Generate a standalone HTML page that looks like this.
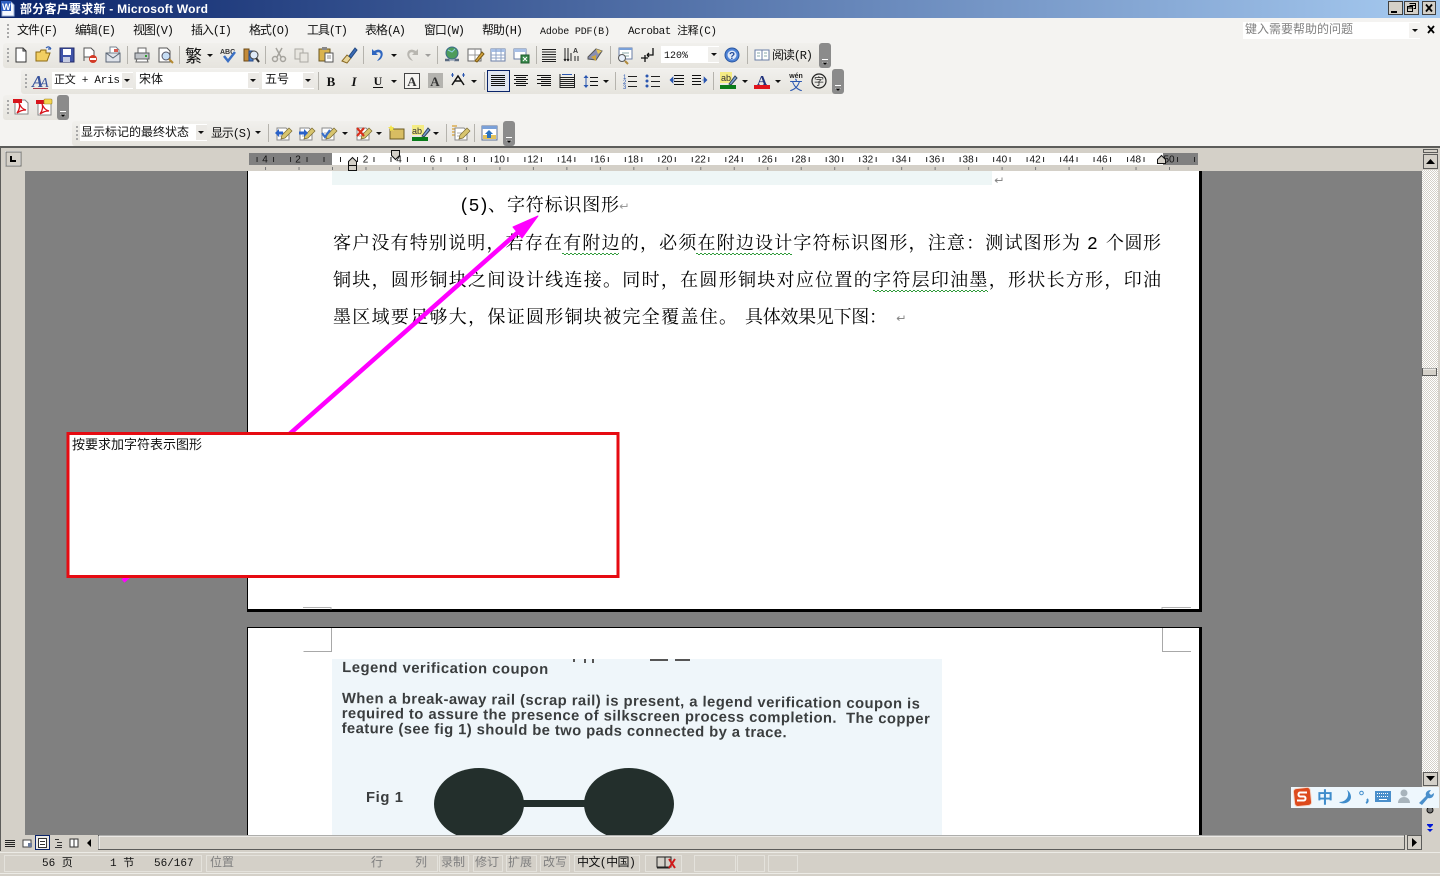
<!DOCTYPE html>
<html lang="zh"><head><meta charset="utf-8"><title>部分客户要求新 - Microsoft Word</title>
<style>
html,body{margin:0;padding:0;width:1440px;height:876px;overflow:hidden;background:#808080}
svg{display:block;position:absolute;left:0;top:0}
text{white-space:pre}
.u{font:12px "Liberation Mono","WenQuanYi Zen Hei","Noto Sans CJK SC",sans-serif;fill:#111}
.g{fill:#808080}
.d{font:18px "Liberation Mono","Noto Serif CJK SC",serif;fill:#000}
.r{font:10px "Liberation Sans",sans-serif;fill:#111;text-anchor:middle}
.s{font:bold 14.800px "Liberation Sans",sans-serif;fill:#3a3d3e}
</style></head><body>
<svg width="1440" height="876" viewBox="0 0 1440 876" xmlns="http://www.w3.org/2000/svg">
<defs>
<linearGradient id="tb" x1="0" x2="1" y1="0" y2="0"><stop offset="0" stop-color="#0a246a"/><stop offset="1" stop-color="#a6caf0"/></linearGradient>
<linearGradient id="bar" x1="0" x2="0" y1="0" y2="1"><stop offset="0" stop-color="#f1f0ed"/><stop offset="1" stop-color="#e6e4de"/></linearGradient>
<pattern id="chk" width="2" height="2" patternUnits="userSpaceOnUse"><rect width="2" height="2" fill="#fff"/><rect width="1" height="1" fill="#d4d0c8"/><rect x="1" y="1" width="1" height="1" fill="#d4d0c8"/></pattern>
<pattern id="rt" width="33.48" height="20" patternUnits="userSpaceOnUse" patternTransform="translate(332 153)"><rect x="8" y="4" width="1" height="5" fill="#222"/><rect x="25" y="4" width="1" height="5" fill="#222"/><rect x="0" y="14" width="1" height="3" fill="#777"/></pattern>
<path id="da" d="M-3 0h6l-3 3z" fill="#111"/>
<g id="grip"><rect y="0" width="2" height="2" fill="#a8a8a8"/><rect y="4" width="2" height="2" fill="#a8a8a8"/><rect y="8" width="2" height="2" fill="#a8a8a8"/><rect y="12" width="2" height="2" fill="#a8a8a8"/></g>
<g id="hnd"><rect x="0" y="0" width="12" height="25" rx="3" fill="#8b8b8b"/><rect x="3" y="16" width="6" height="1" fill="#fff"/><path d="M3 19h6l-3 3z" fill="#fff"/><path d="M3.500 19.500h5l-2.500 2.500z" fill="#000"/></g>
<g id="pdf"><path d="M-6-7h10l3 3v11h-13z" fill="#fff" stroke="#888"/><rect x="-8" y="-8" width="9" height="4" fill="#d8141c"/><path d="M-4 6c3-4 3-8 2-10 2 4 3 6 7 7-4 0-6 1-9 3z" fill="none" stroke="#d8141c" stroke-width="1.300"/></g>
<g id="rev"><path d="M-6-5h9l3 3v9h-12z" fill="#fff" stroke="#8a8a8a"/><path d="M-4 0h6M-4 3h8" stroke="#b0b0b0"/><path d="M-1 2l7-7 3 3-7 7-4 1z" fill="#d8c56e" stroke="#7a6a30" stroke-width=".7"/></g>
</defs>

<!-- window frame / toolbars -->
<rect width="1440" height="876" fill="#d4d0c8"/>
<rect x="0" y="0" width="1440" height="18" fill="url(#tb)"/>
<rect x="0" y="18" width="1440" height="128" fill="#f4f3f1"/>
<rect x="0" y="146" width="1440" height="2" fill="#5c5c5a"/>

<path d="M2 2h9l3 3v11h-12z" fill="#f4f8ff" stroke="#9fb4da"/><rect x="1" y="1" width="10" height="10" fill="#2f5fc0"/><text x="2" y="10" font-family="Liberation Sans" font-size="9" font-weight="bold" fill="#fff">W</text>
<text x="20" y="13" font-family="Liberation Sans,Noto Sans CJK SC,sans-serif" font-size="12" font-weight="bold" fill="#fff" textLength="188">部分客户要求新 - Microsoft Word</text>

<g fill="#d4d0c8" stroke="#404040" stroke-width="1">
<rect x="1388.500" y="1.500" width="14" height="13"/><rect x="1404.500" y="1.500" width="14" height="13"/><rect x="1422.500" y="1.500" width="13" height="13"/></g>
<rect x="1391" y="11" width="6" height="2" fill="#000"/>
<path d="M1409.500 3.500h6v5h-2M1409.500 5.500h6M1407.500 6.500h5v5h-5zM1407.500 8h5" fill="none" stroke="#000"/>
<path d="M1426 4.500l6 7M1432 4.500l-6 7" stroke="#000" stroke-width="1.800"/>

<!-- menu -->
<use href="#grip" x="7" y="24"/>
<g class="u">
<text class="u" x="17" y="34" textLength="41">文件(F)</text>
<text class="u" x="75" y="34" textLength="41">编辑(E)</text>
<text class="u" x="133" y="34" textLength="41">视图(V)</text>
<text class="u" x="191" y="34" textLength="41">插入(I)</text>
<text class="u" x="249" y="34" textLength="41">格式(O)</text>
<text class="u" x="307" y="34" textLength="41">工具(T)</text>
<text class="u" x="365" y="34" textLength="41">表格(A)</text>
<text class="u" x="424" y="34" textLength="41">窗口(W)</text>
<text class="u" x="482" y="34" textLength="41">帮助(H)</text>
<text class="u" x="540" y="34" textLength="70" style="font-size:10px">Adobe PDF(B)</text>
<text class="u" x="628" y="34" textLength="89" style="font-size:11px">Acrobat 注释(C)</text>
</g>
<rect x="1243" y="22" width="177" height="17" fill="#fff"/>
<rect x="1409" y="23" width="11" height="15" fill="#f4f3f1"/>
<text class="u g" x="1245" y="33" style="font-size:12px;fill:#808080">键入需要帮助的问题</text>
<use href="#da" x="1415" y="29"/>
<path d="M1428 26l6 7M1434 26l-6 7" stroke="#000" stroke-width="1.800"/>

<!-- toolbar 1 -->
<rect x="3" y="43" width="822" height="25" rx="3" fill="url(#bar)"/><use href="#hnd" x="819" y="43"/>
<use href="#grip" x="7" y="48"/>
<g transform="translate(21 55)"><path d="M-5-7h7l3 3v11h-10z" fill="#fff" stroke="#333"/><path d="M2-7v3h3" fill="none" stroke="#333"/></g>
<g transform="translate(44 55)"><path d="M-8 6v-9h4l1-2h5v3h4l-3 8z" fill="#f2cf62" stroke="#8c6a14"/><path d="M2-7c2-2 4-1 5 1M7-6l-3 0" fill="none" stroke="#2f5bb0" stroke-width="1.200"/></g>
<g transform="translate(67 55)"><rect x="-7" y="-7" width="14" height="14" fill="#3f53a8" stroke="#222a66"/><rect x="-4" y="-6" width="8" height="6" fill="#fff"/><rect x="-4" y="2" width="7" height="5" fill="#c6cce2"/></g>
<g transform="translate(90 55)"><path d="M-6-7h7l3 3v6h-10z" fill="#fff" stroke="#555"/><path d="M-6-7v13" stroke="#555"/><circle cx="3" cy="4" r="4" fill="#d23a26"/><rect x="0" y="3" width="6" height="2" fill="#fff"/></g>
<g transform="translate(113 55)"><rect x="-7" y="-2" width="14" height="9" fill="#dfe3ea" stroke="#5b6675"/><path d="M-3-8h6l3 3v3h-9z" fill="#fff" stroke="#77828f"/><path d="M-7-2l7 5 7-5" fill="none" stroke="#5b6675"/><rect x="1" y="-6" width="4" height="3" fill="#d85b50"/></g>
<rect x="127" y="46" width="1" height="18" fill="#b5b3ad"/>
<g transform="translate(142 55)"><path d="M-4-7h8v5h-8z" fill="#fff" stroke="#666"/><path d="M-7-2h14v6h-14z" fill="#bfc3c8" stroke="#55595e"/><path d="M-5 4h10l1 3h-12z" fill="#fff" stroke="#666"/><rect x="3" y="0" width="2" height="2" fill="#2ca02c"/></g>
<g transform="translate(165 55)"><path d="M-6-7h8l3 3v11h-11z" fill="#fff" stroke="#555"/><circle cx="1" cy="1" r="4" fill="#c7def5" stroke="#556"/><path d="M4 4l4 4" stroke="#b58a30" stroke-width="2"/></g>
<rect x="179" y="46" width="1" height="18" fill="#b5b3ad"/>
<text x="185" y="62" font-family="Liberation Sans,Noto Sans CJK SC,sans-serif" font-size="17" fill="#111">繁</text><use href="#da" x="210" y="54"/>
<g transform="translate(228 55)"><text x="-8" y="-1" font-family="Liberation Sans" font-size="7" font-weight="bold" fill="#333">ABC</text><path d="M-4 1l4 5 7-9" fill="none" stroke="#3b70c4" stroke-width="2.500"/></g>
<g transform="translate(251 55)"><rect x="-7" y="-6" width="5" height="12" fill="#c48a38" stroke="#6b4a18"/><rect x="-2" y="-4" width="4" height="10" fill="#4a7cc6" stroke="#264a88"/><circle cx="3" cy="0" r="4" fill="#dfeaf8" stroke="#444"/><path d="M5 3l3 4" stroke="#333" stroke-width="2"/></g>
<rect x="265" y="46" width="1" height="18" fill="#b5b3ad"/>
<g transform="translate(279 55)" fill="none" stroke="#a5a39d" stroke-width="1.500"><path d="M-3-7l5 9M3-7l-5 9"/><circle cx="-4" cy="4" r="2.500"/><circle cx="4" cy="4" r="2.500"/></g>
<g transform="translate(302 55)" fill="#e8e6e0" stroke="#aaa8a2"><path d="M-7-6h8v10h-8z"/><path d="M-2-2h8v9h-8z"/></g>
<g transform="translate(326 55)"><rect x="-7" y="-6" width="11" height="12" fill="#d9b34e" stroke="#6c5720"/><rect x="-4" y="-8" width="5" height="3" fill="#888"/><path d="M-1-2h8v9h-8z" fill="#fff" stroke="#555"/><path d="M1 1h4M1 3h4" stroke="#888"/></g>
<g transform="translate(349 55)"><path d="M-7 6l5-6 4 3-4 5z" fill="#e9d69a" stroke="#8a6a24"/><path d="M0 1l6-8 2 2-6 8z" fill="#3b6bb5" stroke="#234a82"/></g>
<rect x="363" y="46" width="1" height="18" fill="#b5b3ad"/>
<g transform="translate(378 55)"><path d="M-6-6v6h6l-2-2c3-2 6 0 4 4l-3 4c7-2 7-10 3-11-2-1-4 0-6 1z" fill="#2f66c0"/></g><use href="#da" x="394" y="54"/>
<g transform="translate(412 55)"><path d="M6-6v6h-6l2-2c-3-2-6 0-4 4l3 4c-7-2-7-10-3-11 2-1 4 0 6 1z" fill="#b8b6b0"/></g><use href="#da" x="428" y="54" opacity=".35"/>
<rect x="437" y="46" width="1" height="18" fill="#b5b3ad"/>
<g transform="translate(452 55)"><circle cx="0" cy="-2" r="6" fill="#4d9c5b" stroke="#3b6a8c"/><path d="M-4-5l4 2 3-3" stroke="#8fd0e6" fill="none"/><path d="M-7 5h5M2 5h5" stroke="#5a6a80" stroke-width="2.500"/><path d="M-3 5h6" stroke="#9aa8ba" stroke-width="1.500"/></g>
<g transform="translate(475 55)"><rect x="-7" y="-6" width="13" height="12" fill="#fff" stroke="#666"/><path d="M-7 0h13M0-6v12" stroke="#999"/><path d="M0 6l7-9 2 2-7 8z" fill="#d4a33c" stroke="#7a5a14"/></g>
<g transform="translate(498 55)"><rect x="-7" y="-6" width="14" height="12" fill="#fff" stroke="#6a7ea6"/><rect x="-7" y="-6" width="14" height="3" fill="#a8c0e6"/><path d="M-7 0h14M-7 3h14M-2-6v12M3-6v12" stroke="#8fa3c6"/></g>
<g transform="translate(521 55)"><rect x="-7" y="-6" width="12" height="10" fill="#fff" stroke="#6a7ea6"/><rect x="-7" y="-6" width="12" height="3" fill="#a8c0e6"/><rect x="0" y="0" width="8" height="8" fill="#3a8a4c" stroke="#1e5a2c"/><path d="M2 2l4 4M6 2l-4 4" stroke="#fff"/></g>
<rect x="536" y="46" width="1" height="18" fill="#b5b3ad"/>
<g transform="translate(549 55)" fill="#222"><rect x="-7" y="-6" width="14" height="1"/><rect x="-7" y="-3.500" width="14" height="1"/><rect x="-7" y="-1" width="14" height="1"/><rect x="-7" y="1.500" width="14" height="1"/><rect x="-7" y="4" width="14" height="1"/><rect x="-7" y="6" width="14" height="1"/></g>
<g transform="translate(572 55)" stroke="#222" fill="none"><path d="M-7-7v13M-4-7v13M-1-2v8M3 1v5M6 1v5"/><text x="1" y="-2" stroke="none" fill="#333" font-family="Liberation Sans" font-size="7" font-weight="bold">A</text><path d="M-7 6l-1-2M-7 6l1-2M-4 6l-1-2M-4 6l1-2" /></g>
<g transform="translate(595 55)"><path d="M-7 2l8-8 6 2-6 9-8-1z" fill="#8a8fb2" stroke="#555"/><path d="M1-6l6 2-4 3z" fill="#e3c35c"/><path d="M-4 2l5-2v6z" fill="#cfa63c"/></g>
<rect x="610" y="46" width="1" height="18" fill="#b5b3ad"/>
<g transform="translate(625 55)"><rect x="-6" y="-7" width="13" height="11" fill="#fff" stroke="#6a7ea6"/><rect x="-6" y="-7" width="13" height="2" fill="#7aa0d8"/><path d="M-3-2h7M-3 1h7" stroke="#8aa"/><circle cx="-3" cy="3" r="3.500" fill="#e8f0fb" stroke="#555"/><path d="M0 6l3 3" stroke="#b08a3a" stroke-width="2"/></g>
<g transform="translate(648 55)" fill="none" stroke="#111"><path d="M5-7v7h-6M-1 0l2-2M-1 0l2 2" stroke-width="1.300"/><path d="M-7 3h7M-3 0v7" stroke-width="1.300"/></g>
<rect x="661" y="46" width="58" height="17" fill="#fff"/><rect x="708" y="47" width="11" height="15" fill="#f0efec"/>
<text x="664" y="58" font-family="Liberation Mono" font-size="10" fill="#111">120%</text><use href="#da" x="714" y="53"/>
<g transform="translate(732 55)"><circle r="7" fill="#4d82d6" stroke="#2a56a0"/><circle r="4.500" fill="#dfe9f8"/><text x="-3" y="4" font-family="Liberation Sans" font-size="10" font-weight="bold" fill="#234a9a">?</text></g>
<rect x="747" y="46" width="1" height="18" fill="#b5b3ad"/>
<g transform="translate(762 55)" fill="#fff" stroke="#6a7ea6"><path d="M-7-5h7v10h-7z"/><path d="M0-5h7v10h-7z"/><path d="M-5-2h3M-5 1h3M2-2h3M2 1h3" stroke="#8aa"/></g>
<text class="u" x="772" y="59" textLength="41">阅读(R)</text>

<!-- toolbar 2 -->
<rect x="21" y="69" width="816" height="25" rx="3" fill="url(#bar)"/><use href="#hnd" x="832" y="69"/>
<use href="#grip" x="25" y="74"/>
<text x="32" y="87" font-family="Liberation Serif" font-size="17" font-style="italic" font-weight="bold" fill="#38539c">A</text><text x="40" y="87" font-family="Liberation Serif" font-size="14" font-style="italic" fill="#38539c">A</text><rect x="33" y="88" width="15" height="1" fill="#a53a4a"/>
<rect x="52" y="72" width="81" height="17" fill="#fff"/><rect x="122" y="73" width="11" height="15" fill="#ebe9e5"/>
<text x="54" y="83" font-family="Liberation Mono,WenQuanYi Zen Hei,sans-serif" font-size="11" fill="#111" textLength="66">正文 + Aris</text><use href="#da" x="127" y="79"/>
<rect x="136" y="72" width="123" height="17" fill="#fff"/><rect x="248" y="73" width="11" height="15" fill="#ebe9e5"/>
<text class="u" x="139" y="83">宋体</text><use href="#da" x="253" y="79"/>
<rect x="262" y="72" width="52" height="17" fill="#fff"/><rect x="303" y="73" width="11" height="15" fill="#ebe9e5"/>
<text class="u" x="265" y="83">五号</text><use href="#da" x="308" y="79"/>
<rect x="318" y="72" width="1" height="18" fill="#b5b3ad"/>
<text x="331" y="86" font-family="Liberation Serif" font-size="13" font-weight="bold" text-anchor="middle" fill="#111">B</text>
<text x="354" y="86" font-family="Liberation Serif" font-size="13" font-weight="bold" font-style="italic" text-anchor="middle" fill="#111">I</text>
<text x="378" y="85" font-family="Liberation Serif" font-size="12" font-weight="bold" text-anchor="middle" fill="#111">U</text><rect x="373" y="87" width="10" height="1" fill="#111"/><use href="#da" x="394" y="80"/>
<rect x="404.500" y="73.500" width="15" height="15" fill="#f5f4f1" stroke="#444"/><text x="412" y="86" font-family="Liberation Serif" font-size="13" font-weight="bold" text-anchor="middle" fill="#333">A</text>
<rect x="428" y="73" width="15" height="15" fill="#b4b3af"/><text x="435" y="86" font-family="Liberation Serif" font-size="13" font-weight="bold" text-anchor="middle" fill="#333">A</text>
<g transform="translate(458 80)"><path d="M-6 5l6-9 6 9M-3 1h6" fill="none" stroke="#111" stroke-width="1.500"/><path d="M-7-5h3M7-5h-3M-5.500-7v4M5.500-7v4" stroke="#2a56b0"/></g><use href="#da" x="474" y="80"/>
<rect x="484" y="72" width="1" height="18" fill="#b5b3ad"/>
<rect x="487.500" y="70.500" width="22" height="21" fill="#e1e6f1" stroke="#0a246a"/>
<path d="M491 75.500h14M491 77.500h14M491 79.500h14M491 81.500h14M491 83.500h14M491 85.500h14" stroke="#111"/>
<path d="M514 75.500h14M516 77.500h10M514 79.500h14M516 81.500h10M514 83.500h14M516 85.500h10" stroke="#111"/>
<path d="M537 75.500h14M541 77.500h10M537 79.500h14M541 81.500h10M537 83.500h14M541 85.500h10" stroke="#111"/>
<path d="M560 77.500h14M560 79.500h14M560 81.500h14M560 83.500h14M560 85.500h14M560 87.500h14M560 74v14M574.500 74v14" stroke="#222"/><path d="M562 74.500h10" stroke="#2a56b0"/>
<path d="M586 76v11" stroke="#2a56b0"/><path d="M583.500 78l2.500-3 2.500 3zM583.500 85l2.500 3 2.500-3z" fill="#2a56b0"/><path d="M590 77.500h8M590 81.500h8M590 85.500h8" stroke="#111"/><use href="#da" x="606" y="80"/>
<rect x="615" y="72" width="1" height="18" fill="#b5b3ad"/>
<g font-family="Liberation Sans" font-size="6" fill="#2a56b0"><text x="623" y="79">1</text><text x="623" y="84">2</text><text x="623" y="89">3</text></g><path d="M628 76.500h9M628 81.500h9M628 86.500h9" stroke="#222"/>
<circle cx="647" cy="76" r="1.500" fill="#2a56b0"/><circle cx="647" cy="81" r="1.500" fill="#2a56b0"/><circle cx="647" cy="86" r="1.500" fill="#2a56b0"/><path d="M651 76.500h9M651 81.500h9M651 86.500h9" stroke="#222"/>
<path d="M674 75.500h10M674 78.500h10M674 81.500h10M674 84.500h10" stroke="#111"/><path d="M670 80l3-3v6zM670 80h5" fill="#2a56b0" stroke="#2a56b0" stroke-width=".6"/>
<path d="M692 75.500h9M692 78.500h9M692 81.500h9M692 84.500h9" stroke="#111"/><path d="M707 80l-3-3v6zM707 80h-5" fill="#2a56b0" stroke="#2a56b0" stroke-width=".6"/>
<rect x="713" y="72" width="1" height="18" fill="#b5b3ad"/>
<rect x="720" y="72" width="12" height="11" fill="#f4ec84"/><text x="721" y="81" font-family="Liberation Sans" font-size="9" fill="#333">ab</text><path d="M729 84l6-8 2 2-6 7z" fill="#7da0d8" stroke="#345"/><rect x="720" y="85" width="16" height="4" fill="#0a7c1a"/><use href="#da" x="745" y="80"/>
<text x="762" y="85" font-family="Liberation Serif" font-size="14" font-weight="bold" text-anchor="middle" fill="#22337c">A</text><rect x="754" y="85" width="16" height="4" fill="#e0141c"/><use href="#da" x="778" y="80"/>
<text x="796" y="78" font-family="Liberation Sans" font-size="7" font-weight="bold" text-anchor="middle" fill="#222">wén</text><text x="796" y="90" font-family="WenQuanYi Zen Hei,Noto Sans CJK SC,sans-serif" font-size="13" text-anchor="middle" fill="#2a56b0">文</text>
<circle cx="819" cy="81" r="7" fill="none" stroke="#222" stroke-width="1.200"/><text x="819" y="85" font-family="WenQuanYi Zen Hei,Noto Sans CJK SC,sans-serif" font-size="10" text-anchor="middle" fill="#222">字</text>

<!-- toolbar 3 -->
<rect x="3" y="95" width="60" height="25" rx="3" fill="url(#bar)"/><use href="#hnd" x="57" y="95"/>
<use href="#grip" x="7" y="100"/>
<use href="#pdf" x="21" y="107"/>
<use href="#pdf" x="44" y="108"/><rect x="44" y="99" width="8" height="5" rx="1" fill="#f4d44c" stroke="#998226" stroke-width=".6"/>

<!-- toolbar 4 -->
<rect x="72" y="121" width="436" height="25" rx="3" fill="url(#bar)"/><use href="#hnd" x="503" y="121"/>
<use href="#grip" x="76" y="126"/>
<rect x="80" y="124" width="127" height="17" fill="#fff"/><rect x="196" y="125" width="11" height="15" fill="#ebe9e5"/>
<text class="u" x="81" y="136">显示标记的最终状态</text><use href="#da" x="201" y="131"/>
<text class="u" x="211" y="137" textLength="41">显示(S)</text><use href="#da" x="258" y="131"/>
<rect x="268" y="124" width="1" height="18" fill="#b5b3ad"/>
<g transform="translate(283 133)"><use href="#rev"/><path d="M-8 0l4-4v2.500h4v3h-4v2.500z" fill="#2a62c8"/></g>
<g transform="translate(306 133)"><use href="#rev"/><path d="M2 0l-4-4v2.500h-5v3h5v2.500z" fill="#2a62c8"/></g>
<g transform="translate(328 133)"><use href="#rev"/><path d="M-6 0l3 4 5-7" fill="none" stroke="#3a70c8" stroke-width="2.200"/></g><use href="#da" x="345" y="132"/>
<g transform="translate(363 133)"><use href="#rev"/><path d="M-6-5l7 8M1-5l-7 8" stroke="#d8301c" stroke-width="2.200"/></g><use href="#da" x="379" y="132"/>
<g transform="translate(397 133)"><rect x="-7" y="-4" width="14" height="10" fill="#d8bd62" stroke="#6a5a24"/><path d="M-6-8l1 2 2 0-1 2 1 2-2-1-2 1 0-2-2-2h2z" fill="#f2e34a"/></g>
<rect x="412" y="125" width="12" height="10" fill="#f4ec84"/><text x="412" y="134" font-family="Liberation Sans" font-size="9" fill="#333">ab</text><path d="M422 136l6-8 2 2-6 7z" fill="#7da0d8" stroke="#345"/><rect x="412" y="137" width="16" height="4" fill="#0a7c1a"/><use href="#da" x="436" y="132"/>
<rect x="446" y="124" width="1" height="18" fill="#b5b3ad"/>
<g transform="translate(459 133)"><path d="M-7-7h5M-7-4h5M-7-1h5M-7 2h5" stroke="#d8a030" stroke-width="1.200"/><use href="#rev" transform="translate(2 0)"/></g>
<rect x="474" y="124" width="1" height="18" fill="#b5b3ad"/>
<g transform="translate(489 133)"><rect x="-7" y="-7" width="15" height="14" fill="#fff" stroke="#5a6f96"/><rect x="-7" y="-7" width="15" height="3" fill="#7aa0d8"/><rect x="-6" y="2" width="13" height="4" fill="#e3c35c"/><path d="M0-3l4 4h-2v4h-4v-4h-2z" fill="#2a72c0"/></g>

<!-- ruler -->
<rect x="5.500" y="151.500" width="15" height="14" fill="#d4d0c8" stroke="#fff"/><rect x="6" y="152" width="15" height="14" fill="none" stroke="#6b6b68"/>
<path d="M11 156v5h5" fill="none" stroke="#000" stroke-width="2"/>
<rect x="249" y="153" width="83" height="12" fill="#808080"/>
<rect x="332" y="153" width="831" height="12" fill="#fff"/>
<rect x="1163" y="153" width="35" height="12" fill="#808080"/>
<rect x="249" y="153" width="949" height="20" fill="url(#rt)"/>
<text class="r" x="265" y="162.500">4</text><text class="r" x="298" y="162.500">2</text>
<text class="r" x="365.500" y="162.500">2</text><text class="r" x="399" y="162.500">4</text><text class="r" x="432.400" y="162.500">6</text><text class="r" x="465.900" y="162.500">8</text><text class="r" x="499.400" y="162.500">10</text><text class="r" x="532.900" y="162.500">12</text><text class="r" x="566.400" y="162.500">14</text><text class="r" x="599.800" y="162.500">16</text><text class="r" x="633.300" y="162.500">18</text><text class="r" x="666.800" y="162.500">20</text><text class="r" x="700.300" y="162.500">22</text><text class="r" x="733.800" y="162.500">24</text><text class="r" x="767.200" y="162.500">26</text><text class="r" x="800.700" y="162.500">28</text><text class="r" x="834.200" y="162.500">30</text><text class="r" x="867.700" y="162.500">32</text><text class="r" x="901.200" y="162.500">34</text><text class="r" x="934.600" y="162.500">36</text><text class="r" x="968.100" y="162.500">38</text><text class="r" x="1001.600" y="162.500">40</text><text class="r" x="1035.100" y="162.500">42</text><text class="r" x="1068.600" y="162.500">44</text><text class="r" x="1102" y="162.500">46</text><text class="r" x="1135.500" y="162.500">48</text><text class="r" x="1169" y="162.500">50</text>
<path d="M391.500 150.500h8v5l-4 4-4-4z" fill="#d4d0c8" stroke="#111"/>
<path d="M352.500 157.500l4 4v4h-8v-4z" fill="#d4d0c8" stroke="#111"/><rect x="348.500" y="165.500" width="8" height="5" fill="#d4d0c8" stroke="#111"/>
<path d="M1161.500 155.500l4 4v4h-8v-4z" fill="#d4d0c8" stroke="#111"/>

<!-- side strips / workspace -->
<rect x="0" y="148" width="1" height="728" fill="#5c5c5a"/>
<rect x="1" y="171" width="24" height="664" fill="#d4d0c8"/>
<rect x="25" y="171" width="1397" height="664" fill="#808080"/>

<!-- scrollbar V -->
<rect x="1422" y="148" width="18" height="688" fill="#d4d0c8"/>
<rect x="1423.500" y="149.500" width="14" height="3" fill="#d4d0c8" stroke="#5c5c5a"/>
<rect x="1423.500" y="154.500" width="14" height="14" fill="#d4d0c8" stroke="#5c5c5a"/><path d="M1426 164h9l-4.500-5z" fill="#000"/>
<rect x="1422" y="170" width="16" height="602" fill="url(#chk)"/>
<rect x="1422.500" y="368.500" width="14" height="7" fill="#d4d0c8" stroke="#5c5c5a"/><path d="M1423 369h13" stroke="#fff"/>
<rect x="1423.500" y="772.500" width="14" height="13" fill="#d4d0c8" stroke="#5c5c5a"/><path d="M1426 776h9l-4.500 5z" fill="#000"/>
<circle cx="1430" cy="810" r="3" fill="#777" stroke="#111"/>
<path d="M1427 825h6l-3 3zM1427 829h6l-3 3z" fill="#0018d8"/><rect x="1427" y="824" width="6" height="1" fill="#0018d8"/>

<!-- page 1 -->
<rect x="247" y="171" width="955" height="441" fill="#000"/>
<rect x="248" y="171" width="951" height="438" fill="#fff"/>
<rect x="332" y="171" width="660" height="14" fill="#eef6f6"/>
<path d="M995 180.500h7v-3M995 180.500l2.500-2M995 180.500l2.500 2" fill="none" stroke="#888"/>
<text class="d" x="459" y="211" textLength="30">(5)</text><text class="d" x="488" y="211">、</text>
<text class="d" x="507" y="211" textLength="112">字符标识图形</text>
<path d="M620 206.500h7v-3M620 206.500l2.500-2M620 206.500l2.500 2" fill="none" stroke="#999"/>
<text class="d" x="333" y="249" textLength="747">客户没有特别说明，若存在有附边的，必须在附边设计字符标识图形，注意：测试图形为</text>
<text class="d" x="1087" y="249">2</text>
<text class="d" x="1106" y="249" textLength="55">个圆形</text>
<text class="d" x="333" y="286" textLength="828">铜块，圆形铜块之间设计线连接。同时，在圆形铜块对应位置的字符层印油墨，形状长方形，印油</text>
<text class="d" x="333" y="323" textLength="404">墨区域要足够大，保证圆形铜块被完全覆盖住。</text>
<text class="d" x="745" y="323" textLength="142">具体效果见下图：</text>
<path d="M897 318.500h7v-3M897 318.500l2.500-2M897 318.500l2.500 2" fill="none" stroke="#888"/>
<g fill="none" stroke="#2f9a3a">
<path d="M562 253.500h57M696 253.500h96M873 290.500h115" stroke-dasharray="2 2"/>
<path d="M564 254.500h55M698 254.500h94M875 291.500h113" stroke-dasharray="2 2"/></g>
<g fill="none" stroke="#b0b0b0"><path d="M303 607.500h28v2M1162 609v-1.500h29"/></g>

<!-- page 2 -->
<rect x="247" y="627" width="955" height="208" fill="#000"/>
<rect x="248" y="628" width="951" height="207" fill="#fff"/>
<path d="M331.500 628v23.500h-28M1162.500 628v23.500h28.500" fill="none" stroke="#a8a8a8"/>
<rect x="332" y="659" width="610" height="176" fill="#eff6fa"/>
<path d="M573 659h2v3h-2zM584 659h2v4h-2zM592 659h2v4h-2zM650 659h18v2h-18zM675 659h15v2h-15z" fill="#555"/>
<g transform="rotate(.55 342 690)">
<text class="s" x="342" y="672" textLength="206">Legend verification coupon</text>
<text class="s" x="342" y="703" textLength="578">When a break-away rail (scrap rail) is present, a legend verification coupon is</text>
<text class="s" x="342" y="718" textLength="588">required to assure the presence of silkscreen process completion.  The copper</text>
<text class="s" x="342" y="733" textLength="445">feature (see fig 1) should be two pads connected by a trace.</text>
</g>
<text class="s" x="366" y="802" textLength="37">Fig 1</text>
<clipPath id="ic"><rect x="332" y="659" width="610" height="176"/></clipPath>
<g clip-path="url(#ic)" fill="#232f2c"><ellipse cx="479" cy="804" rx="45" ry="36"/><ellipse cx="629" cy="804" rx="45" ry="36"/><rect x="520" y="800" width="70" height="7"/></g>

<!-- magenta arrow -->
<path d="M123 581L525 226" stroke="#ff00ff" stroke-width="4.500" fill="none"/>
<path d="M538 216L513 227L522 238z" fill="#ff00ff" stroke="#ff00ff" stroke-linejoin="round"/>

<!-- red box -->
<rect x="68" y="433.500" width="550" height="143" fill="#fff" stroke="#e60b12" stroke-width="3"/>
<text class="u" x="72" y="449" style="font-size:13px">按要求加字符表示图形</text>

<!-- horizontal scrollbar -->
<rect x="1" y="835" width="1421" height="16" fill="#d4d0c8"/>
<path d="M5 840.500h10M5 842.500h10M5 844.500h10M5 846.500h10" stroke="#222"/>
<rect x="23" y="840" width="8" height="7" fill="#fff" stroke="#444"/><rect x="28" y="843" width="4" height="4" fill="#6a7a9a"/>
<rect x="35.500" y="835.500" width="14" height="14" fill="#eceae5" stroke="#0a246a"/><rect x="38.500" y="838.500" width="8" height="9" fill="#fff" stroke="#333"/><path d="M40 841.500h5M40 844.500h5" stroke="#333"/>
<path d="M55 839.500h4M57 842.500h5M57 845.500h5M55 847.500h7" stroke="#333"/>
<path d="M70 839h4v8h-4zM74 839h4v8h-4z" fill="#fff" stroke="#333"/>
<path d="M91 839v8l-4-4z" fill="#000"/>
<rect x="98.500" y="835.500" width="1306" height="14" fill="#d4d0c8" stroke="#5c5c5a"/><path d="M99 836h1305M99 836v13" stroke="#fff"/>
<rect x="1407.500" y="835.500" width="14" height="14" fill="#d4d0c8" stroke="#5c5c5a"/><path d="M1412 838v9l5-4.500z" fill="#000"/>

<!-- status bar -->
<rect x="0" y="851" width="1440" height="25" fill="#d4d0c8"/><rect x="0" y="852" width="1440" height="1" fill="#ecebe6"/><rect x="0" y="873" width="1440" height="1" fill="#ecebe6"/>
<g fill="none" stroke="#e4e2dc"><rect x="4.500" y="855.500" width="197" height="16"/><rect x="206.500" y="855.500" width="231" height="16"/><rect x="439.500" y="855.500" width="29" height="16"/><rect x="473.500" y="855.500" width="29" height="16"/><rect x="506.500" y="855.500" width="30" height="16"/><rect x="540.500" y="855.500" width="29" height="16"/><rect x="574.500" y="855.500" width="65" height="16"/><rect x="645.500" y="855.500" width="36" height="16"/><rect x="694.500" y="855.500" width="41" height="16"/><rect x="737.500" y="855.500" width="27" height="16"/><rect x="768.500" y="855.500" width="29" height="16"/></g>
<text class="u" x="42" y="866" style="font-size:11px">56 页</text>
<text class="u" x="110" y="866" style="font-size:11px">1 节</text>
<text class="u" x="154" y="866" style="font-size:11px">56/167</text>
<text class="u" x="210" y="866" style="fill:#808080">位置</text>
<text class="u" x="371" y="866" style="fill:#808080">行</text>
<text class="u" x="415" y="866" style="fill:#808080">列</text>
<text class="u" x="441" y="866" style="fill:#808080">录制</text>
<text class="u" x="475" y="866" style="fill:#808080">修订</text>
<text class="u" x="508" y="866" style="fill:#808080">扩展</text>
<text class="u" x="543" y="866" style="fill:#808080">改写</text>
<text class="u" x="577" y="866" textLength="59">中文(中国)</text>
<path d="M657 857h8v10h-8zM665 857h6v10h-6zM657 868h13" fill="none" stroke="#222"/><path d="M669 859l6 9M675 859l-6 9" stroke="#d01818" stroke-width="2"/>

<!-- IME bar -->
<rect x="1291" y="787" width="148" height="21" fill="#eef7fd"/>
<g transform="rotate(-6 1302 797)"><rect x="1294" y="788" width="17" height="18" rx="3" fill="#dd4a1d" stroke="#f2d8cc"/></g>
<path d="M1307 792.500h-7c-2 0-2 4 0 4h4c2 0 2 4 0 4h-7" fill="none" stroke="#fff" stroke-width="2"/>
<text x="1317" y="803" font-family="WenQuanYi Zen Hei,Noto Sans CJK SC,sans-serif" font-size="16" font-weight="bold" fill="#3f8ccb">中</text>
<path d="M1347 790c3 5 0 12-8 12 3 3 12 1 12-5 0-3-2-6-4-7z" fill="#3f8ccb"/>
<circle cx="1361.500" cy="793" r="1.800" fill="none" stroke="#3f8ccb"/><path d="M1367 799c1 1 1 3-1 4" stroke="#3f8ccb" stroke-width="2" fill="none"/>
<rect x="1375" y="791" width="16" height="11" fill="#4a8fcb"/><path d="M1377 793.500h12M1377 796.500h12" stroke="#fff" stroke-dasharray="1 1"/><path d="M1379 799.500h8" stroke="#fff"/>
<circle cx="1404" cy="793" r="3.500" fill="#a8b4bc"/><path d="M1398 803c0-8 12-8 12 0z" fill="#a8b4bc"/>
<path d="M1419 803l7-7c-1-3 1-6 5-6l-2 3 2 2 3-2c0 4-3 6-6 5l-6 7z" fill="#4a8fcb"/>
</svg>
</body></html>
